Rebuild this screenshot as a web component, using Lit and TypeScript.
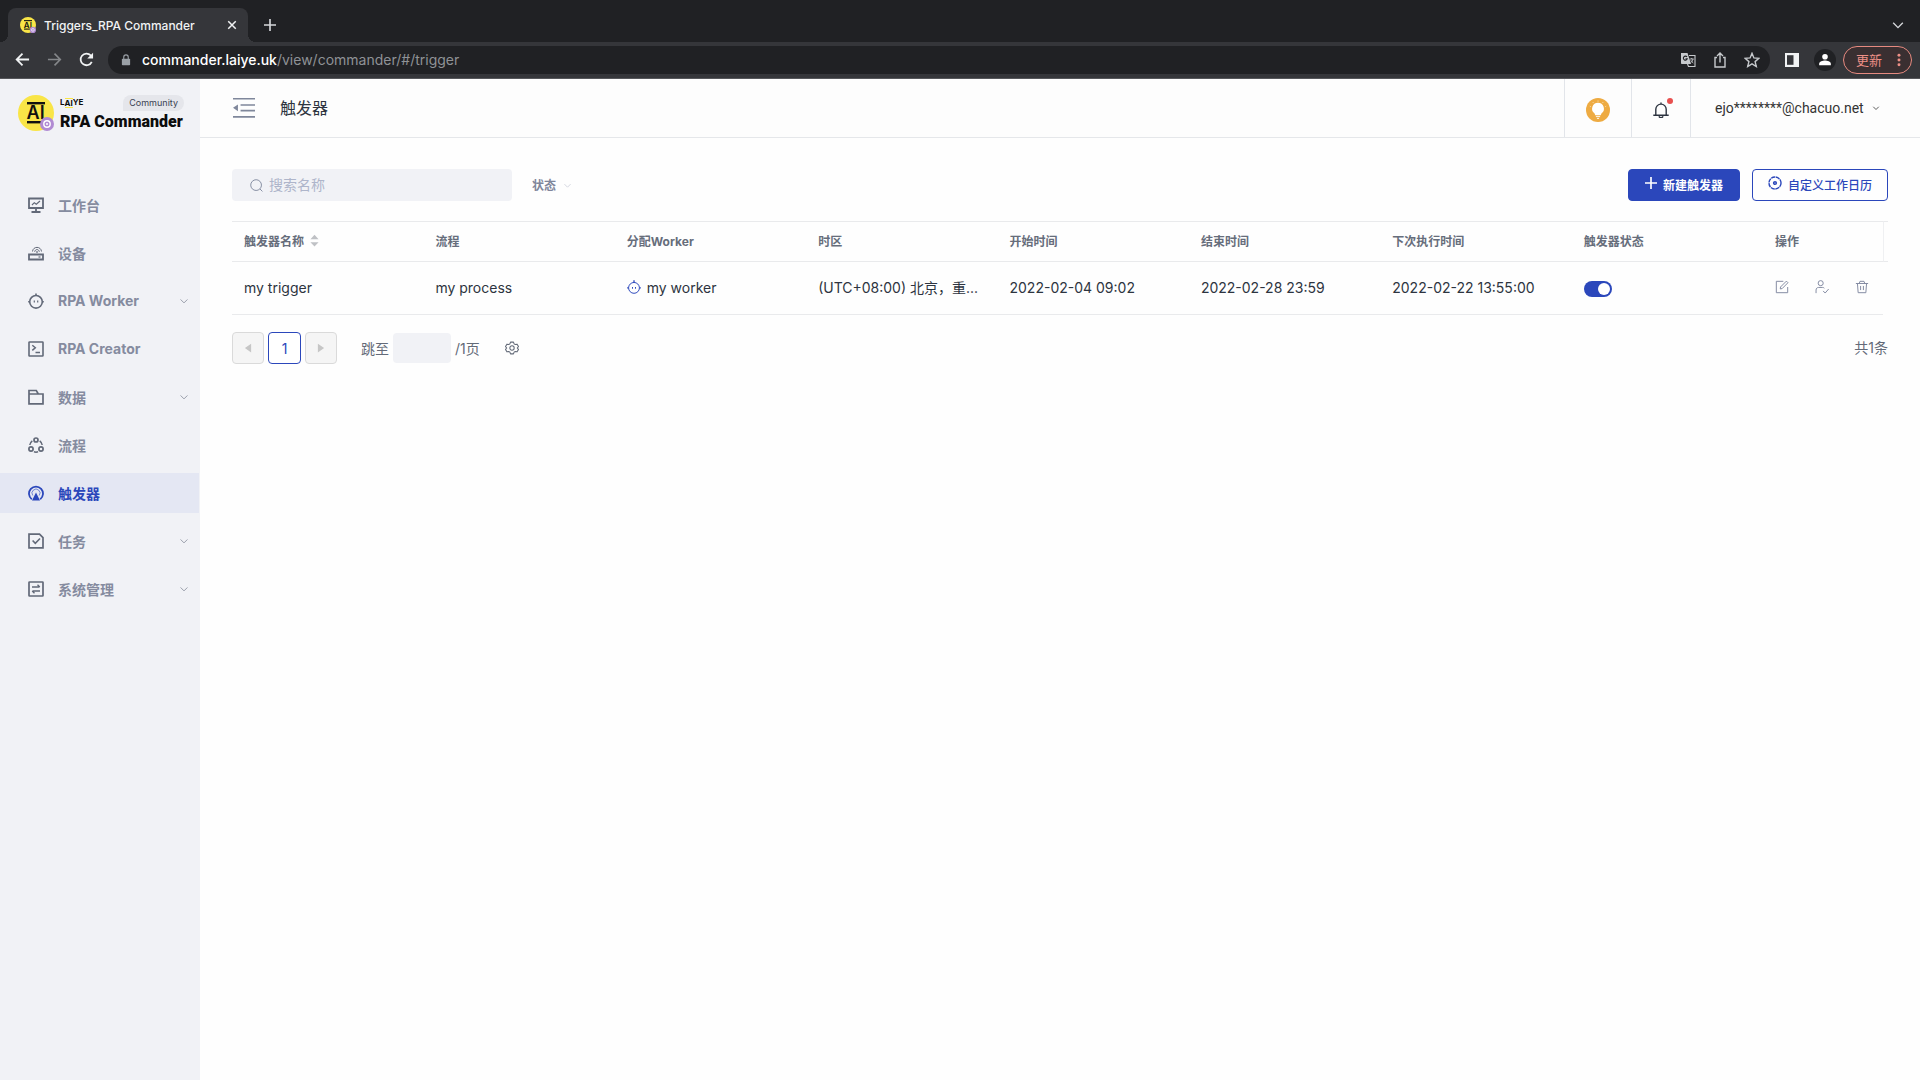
import { LitElement, html, css, svg, nothing } from "lit";
import { customElement, property, state } from "lit/decorators.js";
import { classMap } from "lit/directives/class-map.js";

const brandMark = svg`
  <circle cx="18" cy="18" r="18" fill="#f9e547"/>
  <rect x="9" y="7" width="18" height="2.4" fill="#111"/>
  <rect x="9" y="26" width="15" height="2.4" fill="#111"/>
  <text x="8.6" y="24" font-family="Inter, sans-serif" font-size="18" font-weight="600" fill="#111">AI</text>
  <circle cx="29" cy="29" r="7" fill="#b18bd3"/>
  <circle cx="29" cy="29" r="3.2" fill="none" stroke="#fff" stroke-width="1.4"/>
  <circle cx="29" cy="29" r="1" fill="#fff"/>`;

const icons: Record<string, unknown> = {
  board: svg`<path d="M1 1.500h14v9.500H1zM8 11v3M3.500 15h9" stroke-width="1.800"/><path d="M4 8l2.300-2.300 2 1.600L12 4" stroke-width="1.200"/>`,
  device: svg`<path d="M1 9.500h14v5H1z" stroke-width="1.800"/><path d="M10.500 12h2" stroke-width="1.200"/><path d="M4.500 6.500c.5-5.500 8.500-5.500 9 0M6.700 6.800c.4-3 4.200-3 4.600 0" stroke-width="1"/><circle cx="9" cy="7" r=".5"/>`,
  robot: svg`<circle cx="8" cy="8.800" r="6.300" stroke-width="1.600"/><path d="M8 2.500V.5M.2 8.800h1.500M14.300 8.800h1.500" stroke-width="1.600"/><path d="M6.300 7.500v2M9.700 7.500v2" stroke-width="1.200"/>`,
  worker: svg`<circle cx="8" cy="9" r="6.200" stroke-width="1.100"/><path d="M8 2.800V.3M.2 9h1.600M14.200 9h1.600" stroke-width="1.500"/><path d="M6.300 8v2M9.700 8v2" stroke-width="1.100"/>`,
  creator: svg`<rect x="1" y="1" width="14" height="14" rx=".6" stroke-width="1.600"/><path d="M4.300 4.200l3 2.600-3 2.600M7.500 11.500h4.500" stroke-width="1.500"/>`,
  folder: svg`<path d="M1 14.800V1.500h7.300l2 3.500H15v9.800zM1 5h9.500" stroke-width="1.700"/>`,
  flow: svg`<circle cx="8" cy="3" r="2" stroke-width="1.700"/><circle cx="3" cy="12" r="2.100" stroke-width="1.700"/><circle cx="13" cy="12" r="2.100" stroke-width="1.700"/><path d="M4.300 3.800C2.800 4.900 2 6.300 1.800 8M11.700 3.800c1.500 1.100 2.300 2.500 2.500 4.200M6 14.800c1.300.5 2.700.5 4 0" stroke-width="1.500"/>`,
  trigger: svg`<path d="M3.800 14.200a7 7 0 1 1 8.400 0" stroke-width="1.800"/><path d="M4.800 10.500a4 4 0 1 1 6.400 0" stroke-width="1" opacity=".6"/><path d="M8 7.500l4 8H4z" fill="currentColor" stroke="none"/>`,
  task: svg`<path d="M1 1.200h10.500L15 4.700v10.100H1z" stroke-width="1.700"/><path d="M4.600 7.500l2.700 2.800L12 5.500" stroke-width="1.600"/>`,
  system: svg`<rect x="1" y="1" width="14" height="14" rx=".5" stroke-width="1.700"/><path d="M4 6h7.500M9.500 3.800L11.800 6M12 10H4.500M6.500 12.200L4.200 10" stroke-width="1.400"/>`,
  chevron: svg`<path d="M2.500 5.500L8 11l5.500-5.500" stroke-width="1.600"/>`,
  search: svg`<circle cx="7.500" cy="7.500" r="6.600" stroke-width="1.200"/><path d="M12.300 12.300l3 3" stroke-width="1.200"/>`,
  plus: svg`<path d="M8 0v16M0 8h16" stroke-width="2.200"/>`,
  badge: svg`<circle cx="8" cy="8" r="6.900" stroke-width="1.600" stroke-dasharray="4.700 .72"/><circle cx="8" cy="8" r="1.500" stroke-width="1.800"/>`,
  gear: svg`<path d="M6.300 1.300h3.400l.7 2 1.300.7 2.100-.4 1.600 2.800L14 8l1.400 1.600-1.600 2.800-2.100-.4-1.300.7-.7 2H6.300l-.7-2-1.300-.7-2.100.4L.6 9.600 2 8 .6 6.400l1.600-2.800 2.100.4 1.300-.7z" stroke-width="1.200" stroke-linejoin="round"/><circle cx="8" cy="8" r="2.500" stroke-width="1.200"/>`,
  edit: svg`<path d="M9.500 1.500H1.500v13h13V8M6 10.200l.3-2.200L13 1.300l1.800 1.800L8.200 9.800z" stroke-width="1.100"/>`,
  assign: svg`<circle cx="6.500" cy="3.600" r="2.900" stroke-width="1.100"/><path d="M1.200 15v-3.500c0-2 1.300-3 3-3h4.300c1 0 1.700.3 2.200.9M9.300 12.500l2.300 2.400 4-4.600" stroke-width="1.100"/>`,
  trash: svg`<path d="M1 4h14M4.800 4l.9-2.500h4.600l.9 2.500M2.800 4l.8 10.500h8.800L13.200 4M6.400 6.800v4.700M9.600 6.800v4.700" stroke-width="1.100"/>`,
  back: svg`<path d="M15 8H2M8 1.800L1.800 8 8 14.200" stroke-width="1.900"/>`,
  forward: svg`<path d="M1 8h13M8 1.800L14.200 8 8 14.200" stroke-width="1.700"/>`,
  reload: svg`<path d="M13.600 10.500A6.200 6.200 0 1 1 12.500 3.700L14 5.200" stroke-width="1.900"/><path d="M15 .800v6.200H8.800z" fill="currentColor" stroke="none"/>`,
  lock: svg`<rect x="2.500" y="6.300" width="11" height="8.700" rx="1" fill="currentColor" stroke="none"/><path d="M5 7V4.200a3 3 0 0 1 6 0V7" stroke-width="1.500"/>`,
  close: svg`<path d="M2 2l12 12M14 2L2 14" stroke-width="2.400"/>`,
  translate: svg`<path d="M1 1h6.500l3.500 11H1.800a.8.800 0 0 1-.8-.8z" fill="currentColor" stroke="none"/><path d="M9 3.500h6v11H8.500l-1-2.500" stroke-width="1.100"/><path d="M9.700 7h4M11.700 6v1M13 7c-.3 1.800-1.300 3-2.500 4M10.800 8.200c.5 1 1.400 2 2.500 2.800" stroke-width=".9"/><path d="M7 5a2 2 0 1 0 .3 1.700H5.500" stroke="#202124" stroke-width="1.100"/>`,
  share: svg`<path d="M5 5.500H3v9.500h10V5.500H11M8 10.500V1.500M5 4l3-3 3 3" stroke-width="1.400"/>`,
  star: svg`<path d="M8 1.300l1.900 4.600 5 .4-3.800 3.300 1.200 4.900L8 11.900l-4.300 2.600 1.200-4.900L1.100 6.300l5-.4z" stroke-width="1.400"/>`,
  panel: svg`<path d="M1 1h14v14H1z" fill="currentColor" stroke="none"/><path d="M3 3.200h6.500v9.600H3z" fill="#35363a" stroke="none"/>`,
  person: svg`<g fill="currentColor" stroke="none"><circle cx="8" cy="4.300" r="3.200"/><path d="M1.300 14v-1.800c0-2.400 4.200-3.600 6.700-3.600s6.700 1.200 6.700 3.600V14z"/></g>`,
  dots: svg`<g fill="currentColor" stroke="none"><circle cx="8" cy="2.500" r="1.700"/><circle cx="8" cy="8" r="1.700"/><circle cx="8" cy="13.500" r="1.700"/></g>`,
  fold: svg`<path d="M0 1.300h16M5.500 5.800h10.500M5.500 9.900h10.500M0 14.500h16" stroke-width="1.200"/><path d="M3.600 5.500v4.800L0 7.900z" fill="currentColor" stroke="none"/>`,
  bulb: svg`<circle cx="8" cy="8" r="8" fill="#eeab42" stroke="none"/><path d="M8 3.200a3.900 3.900 0 0 0-2.400 7l.6 1.300h3.600l.6-1.300A3.900 3.900 0 0 0 8 3.200z" fill="#fff" stroke="none"/><path d="M6.600 12.400h2.800M7.300 13.600h1.400" stroke="#fff" stroke-width=".6"/><path d="M8 1.800v.5M4.600 2.700l.2.400M11.400 2.700l-.2.400M2.600 5.500l.4.200M13.400 5.500l-.4.200" stroke="#fff" stroke-width=".6"/>`,
  bell: svg`<path d="M2.800 13V7.300a5.200 5.200 0 0 1 10.400 0V13M.3 13.200h15.400M8 2V.5" stroke-width="1.400"/><path d="M6 14.200a2.100 2.100 0 0 0 4 0" stroke-width="1.400"/>`,
  left: svg`<path d="M13 1v14L3 8z" fill="currentColor" stroke="none"/>`,
  right: svg`<path d="M3 1v14l10-7z" fill="currentColor" stroke="none"/>`,
  sort: svg`<g fill="currentColor" stroke="none"><path d="M3 6.500h10L8 1zM3 10h10L8 15.500z"/></g>`,
};

const icon = (name: string, size = 16, cls = "") => html`
  <svg class="icon ${cls}" width=${size} height=${size} viewBox="0 0 16 16" fill="none"
    stroke="currentColor" aria-hidden="true">${icons[name]}</svg>`;

const shared = css`
  * { box-sizing: border-box; }
  button, input, select { font: inherit; color: inherit; margin: 0; }
  button { background: none; border: 0; padding: 0; display: inline-flex; align-items: center; justify-content: center; cursor: pointer; }
  a { color: inherit; text-decoration: none; }
  .icon { display: block; flex: none; }
`;

@customElement("browser-bar")
class BrowserBar extends LitElement {
  static styles = [shared, css`
    :host { display: block; color: #f1f3f4; }
    .strip { display: flex; align-items: flex-end; height: 42px; padding-left: 8px; background: #202124; }
    .tab {
      position: relative; display: flex; align-items: center; width: 240px; height: 34px;
      padding: 0 11px 0 12px; gap: 8px; border-radius: 8px 8px 0 0; background: #35363a; font-size: 12px; font-weight: 500;
    }
    .tab::before, .tab::after { content: ""; position: absolute; bottom: 0; width: 8px; height: 8px; }
    .tab::before { left: -8px; background: radial-gradient(circle at 0 0, #202124 8px, #35363a 8px); }
    .tab::after { right: -8px; background: radial-gradient(circle at 100% 0, #202124 8px, #35363a 8px); }
    .tab-title { flex: 1; white-space: nowrap; }
    .new { width: 28px; height: 34px; margin-left: 8px; color: #d5d7da; }
    .more { width: 28px; height: 34px; margin-left: auto; margin-right: 8px; color: #d5d7da; }
    .bar {
      display: flex; align-items: center; height: 37px; padding: 0 8px 1px 14px;
      background: #35363a; border-bottom: 1px solid #56575b;
    }
    .nav { width: 16px; height: 28px; margin-right: 16px; }
    .dim { color: #85878a; }
    .reload { margin-right: 14px; }
    .address {
      flex: 1; display: flex; align-items: center; height: 28px; padding: 0 10px 0 12px;
      border-radius: 14px; background: #202124; font-size: 14px; color: #9aa0a6;
    }
    .url { flex: 1; margin-left: 10px; white-space: nowrap; color: #8f9296; }
    .host { color: #fff; font-weight: 500; }
    .tools { display: flex; gap: 16px; color: #c7cacd; }
    .side { margin-left: 14px; }
    .avatar { width: 22px; height: 22px; margin: 0 7px 0 14px; border-radius: 50%; background: #202124; color: #fff; }
    .update {
      height: 28px; width: 69px; gap: 10px; padding-left: 12px; justify-content: flex-start;
      border: 1px solid #e68a80; border-radius: 14px; background: #3a2f31; color: #ee9087; font-size: 13px;
    }
  `];

  render() {
    return html`
      <div class="strip">
        <div class="tab">
          <svg class="icon" width="16" height="16" viewBox="0 0 36 36" aria-hidden="true">${brandMark}</svg>
          <span class="tab-title">Triggers_RPA Commander</span>
          <button aria-label="Close tab">${icon("close", 10)}</button>
        </div>
        <button class="new" aria-label="New tab">${icon("plus", 12)}</button>
        <button class="more" aria-label="Search tabs">${icon("chevron", 14)}</button>
      </div>
      <div class="bar">
        <button class="nav" aria-label="Back">${icon("back", 15)}</button>
        <button class="nav dim" aria-label="Forward">${icon("forward", 15)}</button>
        <button class="nav reload" aria-label="Reload">${icon("reload", 15)}</button>
        <div class="address">
          ${icon("lock", 12)}
          <span class="url"><span class="host">commander.laiye.uk</span>/view/commander/#/trigger</span>
          <div class="tools">
            <button aria-label="Translate">${icon("translate")}</button>
            <button aria-label="Share">${icon("share")}</button>
            <button aria-label="Bookmark">${icon("star")}</button>
          </div>
        </div>
        <button class="side" aria-label="Side panel">${icon("panel")}</button>
        <button class="avatar" aria-label="Profile">${icon("person", 14)}</button>
        <button class="update">更新 ${icon("dots", 14)}</button>
      </div>`;
  }
}

interface NavEntry { label: string; icon: string; group?: boolean; }

@customElement("side-nav")
class SideNav extends LitElement {
  @property() current = "";

  private entries: NavEntry[] = [
    { label: "工作台", icon: "board" },
    { label: "设备", icon: "device" },
    { label: "RPA Worker", icon: "robot", group: true },
    { label: "RPA Creator", icon: "creator" },
    { label: "数据", icon: "folder", group: true },
    { label: "流程", icon: "flow" },
    { label: "触发器", icon: "trigger" },
    { label: "任务", icon: "task", group: true },
    { label: "系统管理", icon: "system", group: true },
  ];

  static styles = [shared, css`
    :host { display: block; background: #f1f2f6; }
    .brand { display: flex; gap: 6px; padding: 16px 16px 0 18px; height: 106px; color: #0c0c0c; }
    .brand-text { flex: 1; min-width: 0; }
    .top { display: flex; justify-content: space-between; align-items: center; height: 16px; }
    .maker { display: flex; font-size: 8px; font-weight: 700; line-height: 8px; }
    .maker-ai { border: solid #f9e547; border-width: 1px 0; }
    .edition {
      padding: 0 6px; border-radius: 8px 8px 8px 0; background: #e5e6eb;
      font-size: 9px; line-height: 16px; color: #3b4252;
    }
    .product { font-family: Roboto, sans-serif; font-size: 16px; font-weight: 900; line-height: 22px; white-space: nowrap; }
    .list { display: flex; flex-direction: column; gap: 8px; margin: 0; padding: 0; list-style: none; }
    .link {
      display: flex; align-items: center; gap: 14px; height: 40px; padding: 0 10px 0 28px; margin-right: 1px;
      font-size: 14px; font-weight: 700; color: #858b9f;
    }
    .label { padding-bottom: 1px; }
    .link .icon { color: #626978; }
    .link .arrow { margin-left: auto; color: #9a9fab; }
    .active { background: #e4e7f3; color: #2b47bb; }
    .active .icon { color: #2b47bb; }
  `];

  render() {
    return html`
      <div class="brand">
        <svg class="icon" width="36" height="36" viewBox="0 0 36 36" aria-hidden="true">${brandMark}</svg>
        <div class="brand-text">
          <div class="top">
            <span class="maker">L<span class="maker-ai">AI</span>YE</span>
            <span class="edition">Community</span>
          </div>
          <div class="product">RPA Commander</div>
        </div>
      </div>
      <nav>
        <ul class="list">
          ${this.entries.map((e) => html`
            <li><a href="#" class=${classMap({ link: true, active: e.label === this.current })}>
              ${icon(e.icon)}<span class="label">${e.label}</span>${e.group ? icon("chevron", 10, "arrow") : nothing}
            </a></li>`)}
        </ul>
      </nav>`;
  }
}

@customElement("page-header")
class PageHeader extends LitElement {
  @property() heading = "";

  static styles = [shared, css`
    :host { display: flex; align-items: stretch; box-sizing: border-box; height: 59px; padding-left: 33px; border-bottom: 1px solid #e5e7ea; background: #fdfdfd; color: #2d3440; }
    .fold { color: #7f879b; }
    .title { flex: 1; margin: 0 0 0 25px; font-size: 16px; font-weight: 400; line-height: 58px; }
    .cell { border-left: 1px solid #e2e5ea; padding-top: 4px; }
    .tips { width: 67px; }
    .notice { width: 59px; }
    .bell { position: relative; padding-right: 1px; }
    .dot { position: absolute; top: -4px; right: -3px; width: 6px; height: 6px; border-radius: 50%; background: #e8504f; }
    .account { width: 230px; justify-content: flex-start; gap: 8px; padding: 0 0 0 24px; font-family: Roboto, sans-serif; font-size: 14px; color: #333; }
  `];

  render() {
    return html`
      <button class="fold" aria-label="Collapse menu">${icon("fold", 22)}</button>
      <h1 class="title">${this.heading}</h1>
      <button class="cell tips" aria-label="Tips">${icon("bulb", 24)}</button>
      <button class="cell notice" aria-label="Notifications">
        <span class="bell">${icon("bell", 16)}<span class="dot"></span></span>
      </button>
      <button class="cell account">ejo********@chacuo.net ${icon("chevron", 8)}</button>`;
  }
}

interface Trigger {
  name: string; process: string; worker: string; zone: string;
  start: string; end: string; next: string; enabled: boolean;
}

@customElement("trigger-list")
class TriggerList extends LitElement {
  @state() private rows: Trigger[] = [{
    name: "my trigger", process: "my process", worker: "my worker",
    zone: "(UTC+08:00) 北京，重...",
    start: "2022-02-04 09:02", end: "2022-02-28 23:59", next: "2022-02-22 13:55:00", enabled: true,
  }];

  private columns = ["流程", "分配Worker", "时区", "开始时间", "结束时间", "下次执行时间", "触发器状态"];

  static styles = [shared, css`
    :host { display: block; padding: 31px 32px; font-size: 14px; color: #2d3440; }
    .filters { display: flex; align-items: center; height: 32px; margin-bottom: 20px; }
    .search { display: flex; align-items: center; width: 280px; height: 32px; padding: 0 16px 0 18px; gap: 6px; border-radius: 4px; background: #f1f2f6; color: #858da1; }
    .search-input { flex: 1; min-width: 0; padding: 0 0 2px; border: 0; outline: 0; background: none; }
    .search-input::placeholder { color: #aeb5ca; opacity: 1; }
    .status { display: flex; align-items: center; gap: 6px; margin: 0 auto 0 20px; font-size: 12px; font-weight: 700; color: #7f869b; }
    .status-select { appearance: none; border: 0; padding: 0; background: none; }
    .status .icon { color: #d0d3dc; }
    .action { height: 32px; padding: 0 15px 2px; gap: 6px; border: 1px solid #2b47bb; border-radius: 4px; font-size: 12px; font-weight: 500; color: #2b47bb; }
    .action .icon { margin-bottom: 2px; }
    .primary { padding: 0 16px 2px; margin-right: 12px; background: #2b47bb; color: #fff; font-weight: 700; }
    .table { width: 100%; table-layout: fixed; border-collapse: separate; border-spacing: 0; }
    .head, .cell { padding: 0 12px 2px; text-align: left; white-space: nowrap; border-bottom: 1px solid #e9eaec; }
    .head { height: 41px; border-top: 1px solid #e9eaec; font-size: 12px; font-weight: 700; color: #666d7b; }
    .cell { height: 53px; overflow: hidden; text-overflow: ellipsis; }
    .ops-col { width: 120px; }
    .gutter { width: 5px; padding: 0; border-left: 1px solid #eff0f2; }
    .inline { display: flex; align-items: center; gap: 4px; }
    .sort { color: #bfc1c5; }
    .worker { gap: 6px; }
    .worker .icon { color: #2b47bb; }
    .ops { display: flex; align-items: center; gap: 26px; color: #8188a0; }
    .switch { appearance: none; display: block; width: 28px; height: 16px; margin: 3px 0 0; padding: 2px; border-radius: 8px; background: #b9bfcc; cursor: pointer; }
    .switch::before { content: ""; display: block; width: 12px; height: 12px; border-radius: 50%; background: #fff; }
    .switch:checked { background: #2b47bb; }
    .switch:checked::before { margin-left: auto; }
    .pager { display: flex; align-items: center; height: 32px; margin-top: 17px; color: #636a78; }
    .page { width: 32px; height: 32px; border: 1px solid #dadada; border-radius: 4px; background: #f5f5f5; color: #c6c6c6; margin-right: 4px; }
    .page-current { width: 33px; border-color: #2b47bb; background: #fff; color: #2b47bb; }
    .jump { display: flex; align-items: center; gap: 4px; margin: 0 25px 0 20px; }
    .jump-input { width: 58px; height: 30px; border: 0; border-radius: 4px; background: #f1f2f6; }
    .total { margin-left: auto; padding-bottom: 2px; }
  `];

  private toggle(row: Trigger) {
    this.rows = this.rows.map((r) => (r === row ? { ...r, enabled: !r.enabled } : r));
  }

  render() {
    return html`
      <div class="filters">
        <label class="search">${icon("search", 13)}
          <input class="search-input" type="text" placeholder="搜索名称" aria-label="搜索名称">
        </label>
        <label class="status">
          <select class="status-select" aria-label="状态"><option>状态</option></select>
          ${icon("chevron", 9)}
        </label>
        <button class="action primary">${icon("plus", 12)}新建触发器</button>
        <button class="action">${icon("badge", 14)}自定义工作日历</button>
      </div>
      <table class="table">
        <thead>
          <tr>
            <th class="head"><span class="inline">触发器名称${icon("sort", 13, "sort")}</span></th>
            ${this.columns.map((c) => html`<th class="head">${c}</th>`)}
            <th class="head ops-col">操作</th>
            <td class="head gutter"></td>
          </tr>
        </thead>
        <tbody>
          ${this.rows.map((r) => html`
            <tr>
              <td class="cell">${r.name}</td>
              <td class="cell">${r.process}</td>
              <td class="cell"><span class="inline worker">${icon("worker", 14)}${r.worker}</span></td>
              <td class="cell">${r.zone}</td>
              <td class="cell">${r.start}</td>
              <td class="cell">${r.end}</td>
              <td class="cell">${r.next}</td>
              <td class="cell"><input class="switch" type="checkbox" aria-label="触发器状态"
                .checked=${r.enabled} @change=${() => this.toggle(r)}></td>
              <td class="cell"><span class="ops">
                <button aria-label="编辑">${icon("edit", 14)}</button>
                <button aria-label="分配">${icon("assign", 14)}</button>
                <button aria-label="删除">${icon("trash", 14)}</button>
              </span></td>
            </tr>`)}
        </tbody>
      </table>
      <div class="pager">
        <button class="page" aria-label="上一页">${icon("left", 10)}</button>
        <button class="page page-current">1</button>
        <button class="page" aria-label="下一页">${icon("right", 10)}</button>
        <label class="jump">跳至<input class="jump-input" type="text"><span>/1页</span></label>
        <button aria-label="列设置">${icon("gear", 14)}</button>
        <span class="total">共1条</span>
      </div>`;
  }
}

@customElement("app-root")
class AppRoot extends LitElement {
  static styles = css`
    :host {
      display: flex; flex-direction: column; min-height: 100vh; background: #fefefe;
      font-family: Inter, "Noto Sans CJK SC", sans-serif;
    }
    .body { flex: 1; display: flex; }
    .side { width: 200px; flex: none; }
    .main { flex: 1; min-width: 0; }
  `;

  render() {
    return html`
      <browser-bar></browser-bar>
      <div class="body">
        <side-nav class="side" current="触发器"></side-nav>
        <main class="main">
          <page-header heading="触发器"></page-header>
          <trigger-list></trigger-list>
        </main>
      </div>`;
  }
}
